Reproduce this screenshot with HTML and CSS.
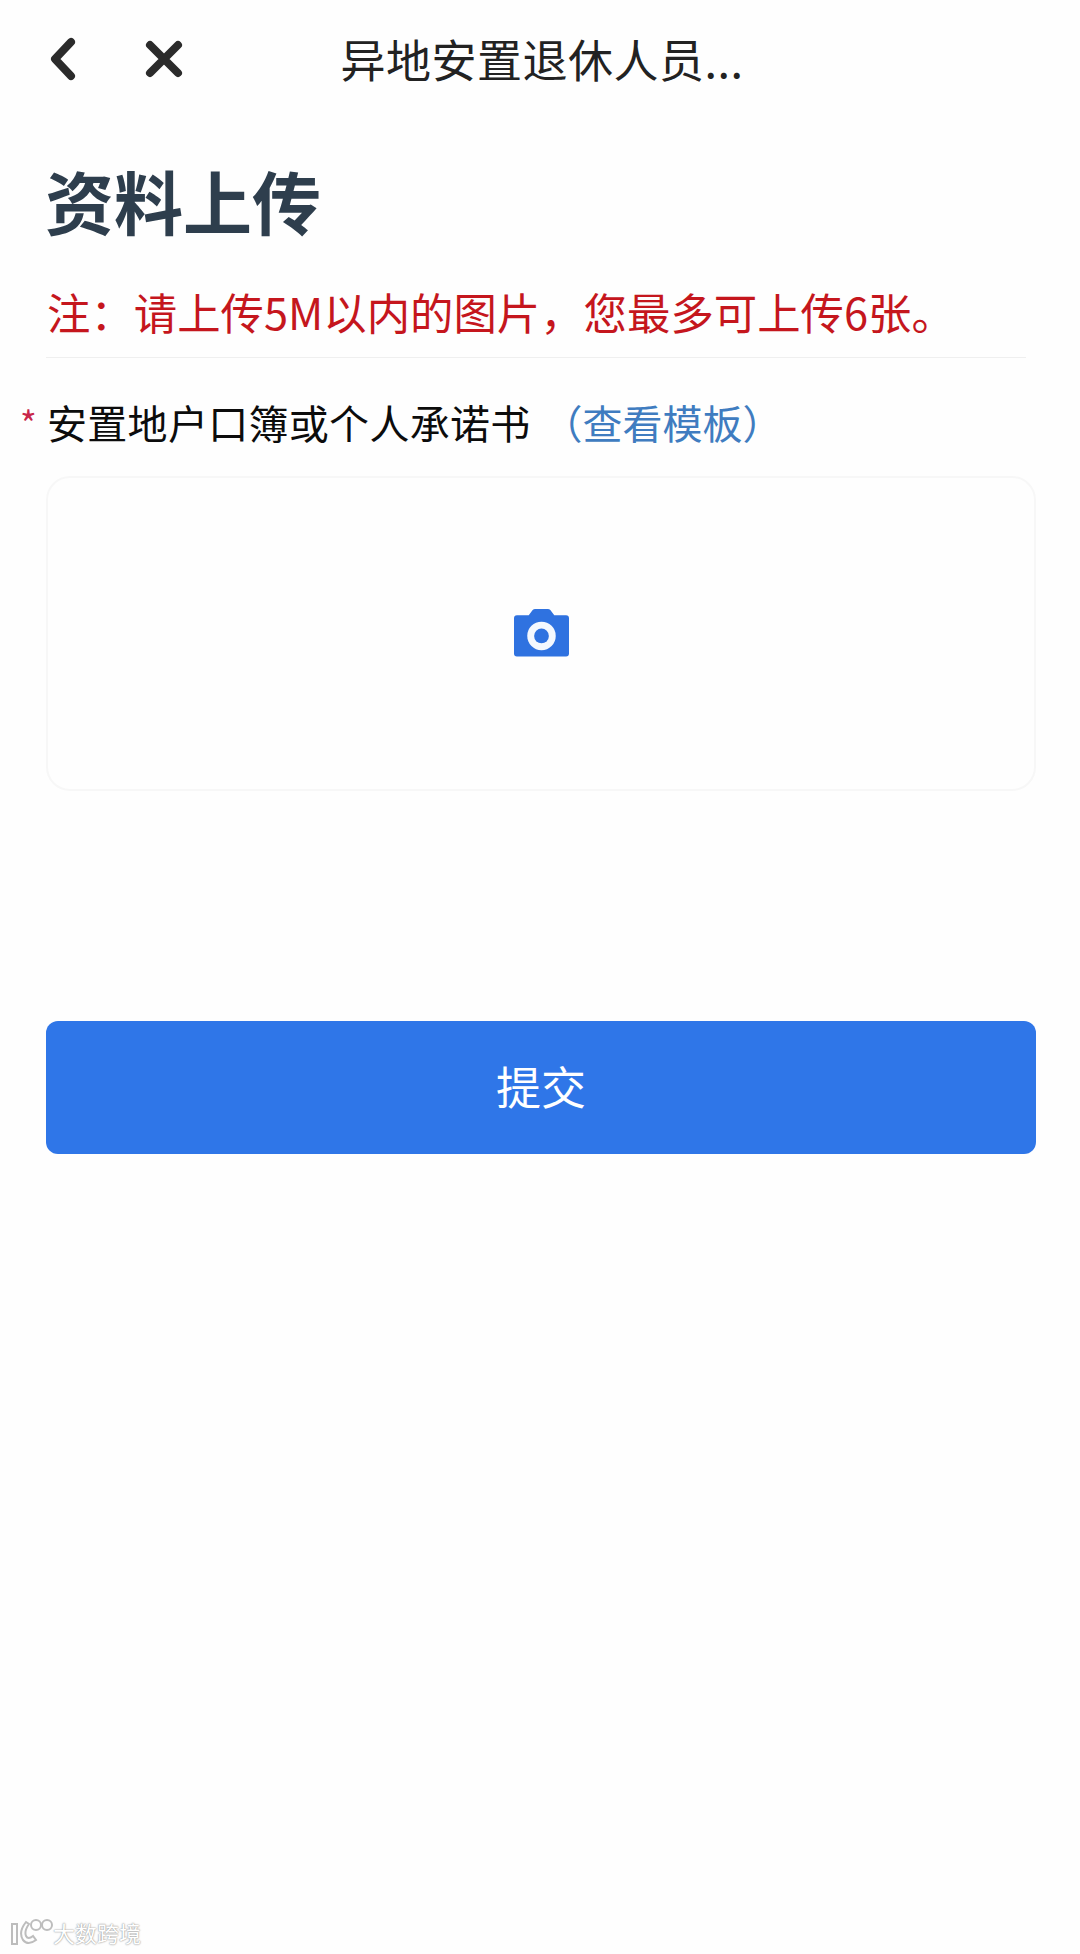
FILE: index.html
```html
<!DOCTYPE html>
<html lang="zh-CN">
<head>
    <meta charset="UTF-8">
    <meta name="viewport" content="width=device-width, initial-scale=1.0">
    <title>资料上传</title>
    <link rel="stylesheet" href="styles.css">
</head>
<body>
    <header class="top-bar">
        <div class="top-icons">
            <svg class="icon-back" width="26" height="44" viewBox="0 0 26 44">
                <path d="M21 5 L5 22 L21 39" fill="none" stroke="#2b2b2b" stroke-width="8" stroke-linecap="round" stroke-linejoin="round"/>
            </svg>
            <svg class="icon-close" width="38" height="38" viewBox="0 0 38 38">
                <path d="M5 5 L33 33 M33 5 L5 33" fill="none" stroke="#2b2b2b" stroke-width="8" stroke-linecap="round"/>
            </svg>
        </div>
        <div class="top-title">异地安置退休人员...</div>
        <div></div>
    </header>

    <main class="content">
        <h1 class="page-title">资料上传</h1>
        <p class="notice">注：请上传5M以内的图片，您最多可上传6张。</p>

        <div class="field-label">
            <span class="required">*</span>
            <span class="field-name">安置地户口簿或个人承诺书</span>
            <a class="template-link" href="#">（查看模板）</a>
        </div>

        <div class="upload-box">
            <svg width="55" height="49" viewBox="0 0 56 49">
                <path d="M3 7 H15 L19 1.5 Q20 0.5 21.500 0.500 H34.500 Q36 0.500 37 1.500 L41 7 H53 Q56 7 56 10 V46 Q56 49 53 49 H3 Q0 49 0 46 V10 Q0 7 3 7 Z" fill="#2f72e0"/>
                <circle cx="28" cy="28" r="14.500" fill="#f4f8fe"/>
                <circle cx="28" cy="28" r="7.500" fill="#2f72e0"/>
            </svg>
        </div>

        <button class="submit-btn" type="button">提交</button>
    </main>

    <div class="watermark">
        <svg width="44" height="28" viewBox="0 0 44 28">
            <g fill="none" stroke="#bdbdbd" stroke-width="2">
                <path d="M3 6 V26 H8 V6 Z"/>
                <path d="M17 4 Q9 14 14 22 Q19 28 27 22 L24 18 Q19 22 17 18 Q15 13 20 6 Z"/>
                <circle cx="27" cy="7" r="5"/>
                <circle cx="38" cy="7" r="5"/>
            </g>
        </svg>
        <span class="watermark-text">大数跨境</span>
    </div>
</body>
</html>
```

FILE: styles.css
```css
body {
    margin: 0;
    height: 1954px;
    position: relative;
    overflow: hidden;
    background-color: #fefefe;
    font-family: "Noto Sans CJK SC", "Noto Sans", sans-serif;
    color: #111;
}

.top-bar {
    display: grid;
    grid-template-columns: 1fr auto 1fr;
    align-items: center;
    height: 118px;
    padding: 0 46px 0 50px;
}

.top-icons {
    display: flex;
    align-items: center;
    gap: 69px;
}

.top-title {
    font-size: 45px;
    line-height: 60px;
    color: #222;
    letter-spacing: 0.5px;
}

.content {
    padding: 0 44px 0 46px;
}

.page-title {
    margin: 30px 0 0 -1px;
    font-size: 69px;
    line-height: 104px;
    font-weight: 700;
    color: #2e3e4d;
}

.notice {
    margin: 31px 10px 0 0;
    padding: 0 0 17px 1px;
    font-size: 43.400px;
    line-height: 57px;
    color: #c5161d;
    border-bottom: 1px solid #efefef;
    white-space: nowrap;
}

.field-label {
    display: flex;
    align-items: center;
    margin-top: 36px;
    font-size: 40px;
    line-height: 56px;
    color: #0c0c0c;
    white-space: nowrap;
}

.field-name {
    letter-spacing: 0.300px;
}

.required {
    width: 27px;
    margin-left: -26px;
    font-size: 36px;
    line-height: 30px;
    color: #c8264a;
}

.template-link {
    margin-left: 12px;
    color: #3f7cc0;
    text-decoration: none;
}

.upload-box {
    display: flex;
    justify-content: center;
    align-items: center;
    box-sizing: border-box;
    height: 315px;
    margin-top: 26px;
    padding-bottom: 2px;
    background-color: #fefefe;
    border: 2px solid #f7f7f7;
    border-radius: 24px;
}

.submit-btn {
    display: block;
    width: 100%;
    height: 133px;
    margin-top: 230px;
    padding: 0 0 5px;
    border: 0;
    border-radius: 12px;
    background-color: #2f76e8;
    color: #fff;
    font-family: inherit;
    font-size: 45px;
}

.watermark {
    position: absolute;
    left: 9px;
    bottom: 8px;
    display: flex;
    align-items: center;
}

.watermark-text {
    font-size: 22px;
    line-height: 26px;
    color: #fff;
    text-shadow: 0 0 2px #999, 0 0 1px #999;
}
```
